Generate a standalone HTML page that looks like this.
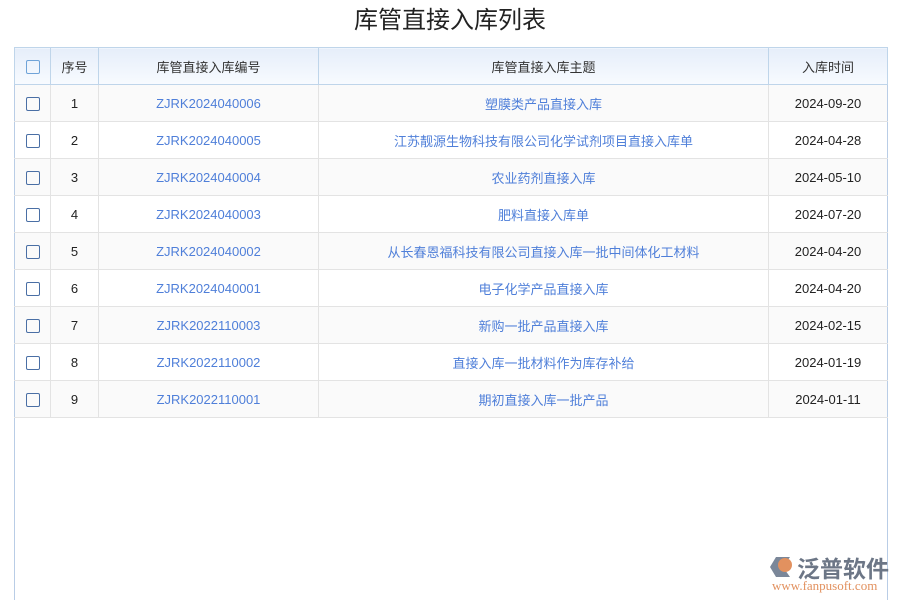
<!DOCTYPE html><html><head><meta charset="utf-8"><style>
html,body{margin:0;width:900px;height:600px;background:#fff;overflow:hidden}
body{font-family:"Liberation Sans","Noto Sans CJK SC",sans-serif;position:relative}
h1{margin:0;position:absolute;top:5px;left:0;width:900px;text-align:center;font-size:24px;font-weight:normal;color:#222;line-height:32px}
.box{position:absolute;left:14px;top:47px;width:872px;height:560px;border:1px solid #b9cde6;border-top:none}
table{border-collapse:collapse;position:absolute;left:14px;top:47px;width:873px;table-layout:fixed;font-size:13px}
th,td{height:36px;text-align:center;border:1px solid #e3e3e3;padding:0}
th{background:linear-gradient(#e6eefa,#f8fbff);border:1px solid #bfd5ea;font-weight:normal;color:#333}
td{color:#222}
tr:nth-child(even) td{background:#fafafa}
td.l{color:#4f7fd9}
td:first-child{border-left-color:#b9cde6}
td:last-child{border-right-color:#b9cde6}
.cb{display:inline-block;width:12px;height:12px;border:1px solid #4a6fa5;border-radius:2px;vertical-align:middle}
th .cb{border-color:#6fa3d8}
.logo{position:absolute;left:770px;top:553px}
</style></head><body>
<h1>库管直接入库列表</h1>
<div class="box"></div>
<table>
<colgroup><col style="width:36px"><col style="width:48px"><col style="width:220px"><col style="width:450px"><col style="width:119px"></colgroup>
<tr><th><span class="cb"></span></th><th>序号</th><th>库管直接入库编号</th><th>库管直接入库主题</th><th>入库时间</th></tr>
<tr><td><span class="cb"></span></td><td>1</td><td class="l">ZJRK2024040006</td><td class="l">塑膜类产品直接入库</td><td>2024-09-20</td></tr>
<tr><td><span class="cb"></span></td><td>2</td><td class="l">ZJRK2024040005</td><td class="l">江苏靓源生物科技有限公司化学试剂项目直接入库单</td><td>2024-04-28</td></tr>
<tr><td><span class="cb"></span></td><td>3</td><td class="l">ZJRK2024040004</td><td class="l">农业药剂直接入库</td><td>2024-05-10</td></tr>
<tr><td><span class="cb"></span></td><td>4</td><td class="l">ZJRK2024040003</td><td class="l">肥料直接入库单</td><td>2024-07-20</td></tr>
<tr><td><span class="cb"></span></td><td>5</td><td class="l">ZJRK2024040002</td><td class="l">从长春恩福科技有限公司直接入库一批中间体化工材料</td><td>2024-04-20</td></tr>
<tr><td><span class="cb"></span></td><td>6</td><td class="l">ZJRK2024040001</td><td class="l">电子化学产品直接入库</td><td>2024-04-20</td></tr>
<tr><td><span class="cb"></span></td><td>7</td><td class="l">ZJRK2022110003</td><td class="l">新购一批产品直接入库</td><td>2024-02-15</td></tr>
<tr><td><span class="cb"></span></td><td>8</td><td class="l">ZJRK2022110002</td><td class="l">直接入库一批材料作为库存补给</td><td>2024-01-19</td></tr>
<tr><td><span class="cb"></span></td><td>9</td><td class="l">ZJRK2022110001</td><td class="l">期初直接入库一批产品</td><td>2024-01-11</td></tr>
</table>
<div class="logo">
<svg width="26" height="24" style="position:absolute;left:0;top:2px"><polygon points="6,2 20,2 13,12 20,22 6,22 0,12" fill="#7b8799"/><circle cx="15" cy="10" r="7" fill="#e2915f"/></svg>
<div style="position:absolute;left:27px;top:-3px;font-size:23px;color:#6c7686;white-space:nowrap;font-weight:bold">泛普软件</div>
<div style="position:absolute;left:2px;top:25px;font-size:13px;color:#e2915f;font-family:'Liberation Serif',serif;white-space:nowrap">www.fanpusoft.com</div>
</div>
</body></html>
